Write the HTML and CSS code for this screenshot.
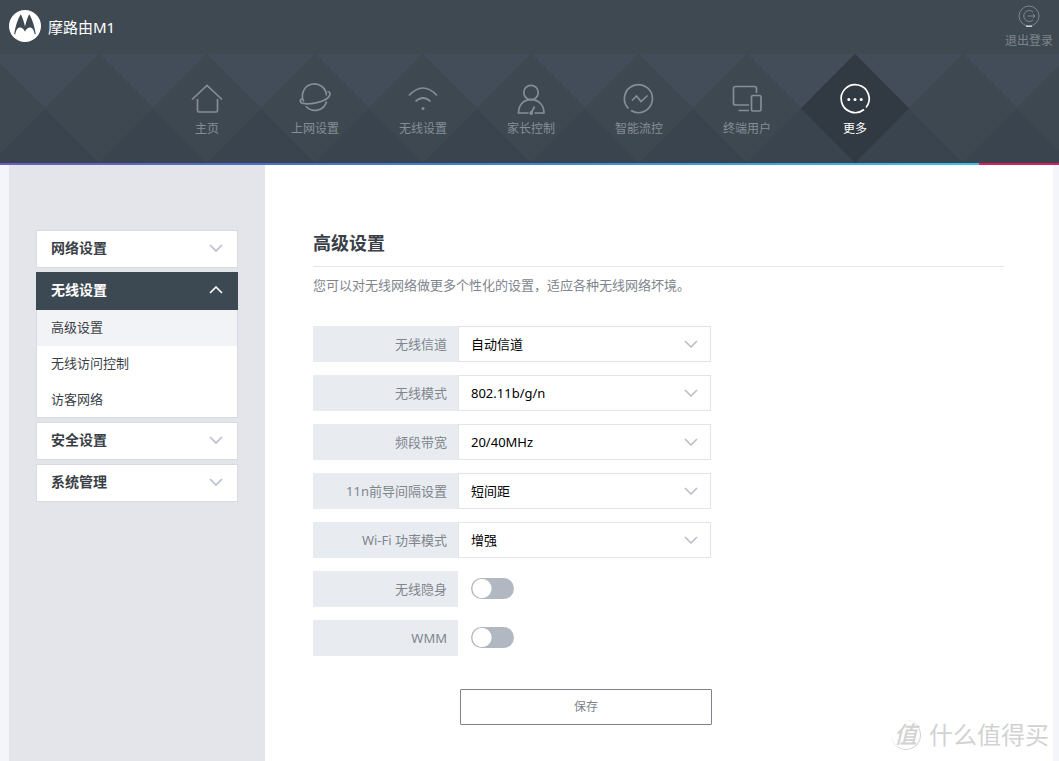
FILE: index.html
```html
<!DOCTYPE html>
<html lang="zh-CN">
<head>
<meta charset="utf-8">
<meta name="viewport" content="width=device-width, initial-scale=1">
<title>摩路由M1</title>
<link rel="stylesheet" href="styles.css">
</head>
<body>
<header class="topbar">
  <div class="brand">
    <svg class="logo" viewBox="0 0 32 32" aria-hidden="true">
      <circle cx="16" cy="16" r="16" fill="#fff"/>
      <path d="M5.2 24.3C6.200 17.500 8.600 9 11.800 4.200C13.600 7.500 15 12 16 16.500C17 12 18.400 7.500 20.200 4.200C23.400 9 25.800 17.500 26.800 24.300H25.700C25 20.200 23.300 17.600 20.900 17.600C18.800 17.600 17 19.300 16 21.800C15 19.300 13.200 17.600 11.100 17.600C8.700 17.600 7 20.200 6.300 24.300Z" fill="#3f4952"/>
    </svg>
    <span>摩路由M1</span>
  </div>
  <a class="logout" href="#">
    <svg class="logout-icon" viewBox="0 0 22 22" aria-hidden="true">
      <circle cx="11" cy="11" r="10"/>
      <path d="M15 7A5.500 5.500 0 1 0 15 15M9.500 11H17M14.800 8.800L17 11L14.800 13.200"/>
      <path class="glow" d="M8 21.200H14"/>
    </svg>
    <span>退出登录</span>
  </a>
</header>
<nav class="nav" aria-label="主导航">
  <ul class="nav-list">
    <li><a class="nav-item" href="#">
      <svg class="icon" viewBox="0 0 34 34" aria-hidden="true"><path d="M2 17.500L17 3.500L32 17.500M7.500 17V28.500Q7.500 30 9 30H26Q27.500 30 27.500 28.500V17"/></svg>
      <span>主页</span></a></li>
    <li><a class="nav-item" href="#">
      <svg class="icon" viewBox="0 0 34 34" aria-hidden="true"><path d="M5.800 19.500A12 12 0 1 1 28.400 13.500M28.600 19.500A12 12 0 0 1 8 24.300M4.500 16.500C1.500 17 1.500 21 5 21.400C9 22.300 14 21.600 19 20.600C24 19.500 29 17.500 31 14.500C32.800 12 32 9.500 29.500 9.800"/></svg>
      <span>上网设置</span></a></li>
    <li><a class="nav-item" href="#">
      <svg class="icon" viewBox="0 0 34 34" aria-hidden="true"><path d="M3 13.500Q17-1.500 31 13.500M9.500 19.500Q17 12.500 24.500 19.500"/><circle class="dot" cx="17" cy="26.500" r="1.500"/></svg>
      <span>无线设置</span></a></li>
    <li><a class="nav-item" href="#">
      <svg class="icon" viewBox="0 0 34 34" aria-hidden="true"><circle cx="17" cy="10.500" r="7.200"/><path d="M14.500 31H4.500C4.500 23.500 9 17.700 17 17.700C25 17.700 30 23.500 30 31H20.500M17.500 30.500L20.500 24.500"/><circle class="dot" cx="17.200" cy="31" r="1.900"/></svg>
      <span>家长控制</span></a></li>
    <li><a class="nav-item" href="#">
      <svg class="icon" viewBox="0 0 34 34" aria-hidden="true"><path d="M6.500 26.500A14 14 0 1 1 9 28.500M10 18.500L14.500 14L19 19.500L25.500 13.500"/></svg>
      <span>智能流控</span></a></li>
    <li><a class="nav-item" href="#">
      <svg class="icon" viewBox="0 0 34 34" aria-hidden="true"><path d="M26.500 11V6.500Q26.500 4.500 24.500 4.500H5.500Q3.500 4.500 3.500 6.500V21Q3.500 23 5.500 23H19M8.500 28.500H19"/><rect x="21.500" y="13.500" width="9.500" height="15.500" rx="1.500"/></svg>
      <span>终端用户</span></a></li>
    <li><a class="nav-item active" href="#" aria-current="page">
      <svg class="icon" viewBox="0 0 34 34" aria-hidden="true"><path d="M26 27.500A14 14 0 1 1 28 25.500"/><circle class="dot" cx="10.800" cy="17.500" r="1.500"/><circle class="dot" cx="17" cy="17.500" r="1.500"/><circle class="dot" cx="23.200" cy="17.500" r="1.500"/></svg>
      <span>更多</span></a></li>
  </ul>
</nav>
<div class="stripe"><div class="stripe-cool"></div><div class="stripe-warm"></div></div>
<div class="page">
  <aside class="sidebar">
    <button class="menu-head" type="button" aria-expanded="false"><span>网络设置</span>
      <svg class="chevron" viewBox="0 0 14 8" aria-hidden="true"><path d="M1 1L7 7L13 1"/></svg></button>
    <div class="menu-group">
      <button class="menu-head open" type="button" aria-expanded="true"><span>无线设置</span>
        <svg class="chevron" viewBox="0 0 14 8" aria-hidden="true"><path d="M1 7L7 1L13 7"/></svg></button>
      <div class="submenu">
        <a class="sub-item current" href="#">高级设置</a>
        <a class="sub-item" href="#">无线访问控制</a>
        <a class="sub-item" href="#">访客网络</a>
      </div>
    </div>
    <button class="menu-head" type="button" aria-expanded="false"><span>安全设置</span>
      <svg class="chevron" viewBox="0 0 14 8" aria-hidden="true"><path d="M1 1L7 7L13 1"/></svg></button>
    <button class="menu-head" type="button" aria-expanded="false"><span>系统管理</span>
      <svg class="chevron" viewBox="0 0 14 8" aria-hidden="true"><path d="M1 1L7 7L13 1"/></svg></button>
  </aside>
  <main class="main">
    <h1 class="title">高级设置</h1>
    <p class="intro">您可以对无线网络做更多个性化的设置，适应各种无线网络坏境。</p>
    <form class="form">
      <div class="row"><label class="label" for="channel">无线信道</label>
        <div class="select"><select id="channel"><option>自动信道</option></select><svg class="chevron" viewBox="0 0 14 8" aria-hidden="true"><path d="M1 1L7 7L13 1"/></svg></div></div>
      <div class="row"><label class="label" for="mode">无线模式</label>
        <div class="select"><select id="mode"><option>802.11b/g/n</option></select><svg class="chevron" viewBox="0 0 14 8" aria-hidden="true"><path d="M1 1L7 7L13 1"/></svg></div></div>
      <div class="row"><label class="label" for="band">频段带宽</label>
        <div class="select"><select id="band"><option>20/40MHz</option></select><svg class="chevron" viewBox="0 0 14 8" aria-hidden="true"><path d="M1 1L7 7L13 1"/></svg></div></div>
      <div class="row"><label class="label" for="guard">11n前导间隔设置</label>
        <div class="select"><select id="guard"><option>短间距</option></select><svg class="chevron" viewBox="0 0 14 8" aria-hidden="true"><path d="M1 1L7 7L13 1"/></svg></div></div>
      <div class="row"><label class="label" for="power">Wi-Fi 功率模式</label>
        <div class="select"><select id="power"><option>增强</option></select><svg class="chevron" viewBox="0 0 14 8" aria-hidden="true"><path d="M1 1L7 7L13 1"/></svg></div></div>
      <div class="row"><label class="label" for="hidden">无线隐身</label><input class="toggle" id="hidden" type="checkbox" role="switch"></div>
      <div class="row"><label class="label" for="wmm">WMM</label><input class="toggle" id="wmm" type="checkbox" role="switch"></div>
      <button class="save" type="button">保存</button>
    </form>
  </main>
</div>
<div class="watermark"><span class="seal">值</span><span>什么值得买</span></div>
</body>
</html>
```
FILE: styles.css
```css
* {
  box-sizing: border-box;
}

body {
  margin: 0;
  min-height: 100vh;
  display: flex;
  flex-direction: column;
  background: #f4f5fa;
  color: #3a3f47;
  font-family: "Noto Sans", "Noto Sans CJK SC", sans-serif;
  font-size: 13px;
  line-height: 20px;
}

button,
select {
  font: inherit;
  color: inherit;
}

a {
  color: inherit;
  text-decoration: none;
}

svg {
  fill: none;
  stroke: currentColor;
}

.topbar {
  height: 54px;
  display: flex;
  justify-content: space-between;
  padding: 0 6px 0 9px;
  background: #3f4952;
}

.brand {
  display: flex;
  align-items: center;
  gap: 7px;
  padding-bottom: 2px;
  color: #fff;
  font-size: 15px;
}

.brand span {
  padding-top: 2px;
}

.logo {
  width: 32px;
  height: 32px;
  stroke: none;
}

.logout {
  display: flex;
  flex-direction: column;
  align-items: center;
  gap: 4px;
  padding-top: 5px;
  color: #7d858e;
  font-size: 12px;
}

.logout-icon {
  width: 22px;
  height: 22px;
}

.glow {
  stroke: #fff;
}

.nav {
  height: 109px;
  padding-left: 3px;
  background-color: #3a444f;
  background-image:
    linear-gradient(135deg, #434d59 25%, transparent 25%),
    linear-gradient(225deg, #434d59 25%, transparent 25%),
    linear-gradient(45deg, #3a444f 25%, transparent 25%),
    linear-gradient(315deg, #3a444f 25%, #3e4851 25%);
  background-size: 108px 108px;
  background-position: center top;
  background-origin: content-box;
  background-repeat: repeat-x;
}

.nav-list {
  display: flex;
  justify-content: center;
  margin: 0;
  padding: 0;
  list-style: none;
}

.nav-item {
  width: 108px;
  height: 109px;
  display: flex;
  flex-direction: column;
  align-items: center;
  gap: 3px;
  padding-top: 28px;
  color: #858e97;
  font-size: 12px;
}

.nav-item.active {
  color: #fff;
  background: #313943;
  clip-path: polygon(50% 0, 100% 50%, 50% 100%, 0 50%);
}

.icon {
  width: 34px;
  height: 34px;
  stroke-width: 1.7;
}

.dot {
  fill: currentColor;
  stroke: none;
}

.stripe {
  display: flex;
  height: 2px;
}

.stripe-cool {
  flex: 1;
  background: linear-gradient(90deg, #6c5cc0, #4a6fd0 28%, #3a88da 55%, #40bdee);
}

.stripe-warm {
  width: 80px;
  background: #d81e5f;
}

.page {
  flex: 1;
  display: flex;
  margin: 0 6px 0 9px;
}

.sidebar {
  width: 256px;
  display: flex;
  flex-direction: column;
  gap: 4px;
  padding: 65px 27px;
  background: #e4e5eb;
}

.menu-head {
  width: 100%;
  height: 38px;
  display: flex;
  align-items: center;
  justify-content: space-between;
  padding: 0 14px 2px;
  border: 1px solid #dadbe2;
  background: #fff;
  font-size: 14px;
  font-weight: 700;
}

.menu-head.open {
  border-color: #3c4852;
  background: #3c4852;
  color: #fff;
}

.chevron {
  width: 14px;
  height: 8px;
  color: #b8bfc8;
  stroke-width: 1.6;
}

.open .chevron {
  color: #fff;
}

.submenu {
  height: 108px;
  border: 1px solid #dadbe2;
  border-top: 0;
  background: #fff;
}

.sub-item {
  display: block;
  padding: 7px 14px 9px;
}

.sub-item.current {
  background: #f2f3f7;
}

.main {
  flex: 1;
  padding: 65px 49px 36px 48px;
  background: #fff;
}

.title {
  margin: 0;
  padding-bottom: 9px;
  border-bottom: 1px solid #e4e6ed;
  font-size: 18px;
  line-height: 27px;
}

.intro {
  margin: 8px 0 31px;
  color: #80858d;
}

.form {
  max-width: 399px;
  display: flex;
  flex-direction: column;
  gap: 13px;
}

.row {
  height: 36px;
  display: flex;
  align-items: center;
  padding-right: 1px;
}

.label {
  width: 145px;
  padding: 8px 11px;
  background: #e8ecf1;
  color: #80858d;
  text-align: right;
}

.select {
  flex: 1;
  display: grid;
  align-items: center;
}

.select select {
  grid-area: 1 / 1;
  width: 100%;
  height: 36px;
  padding: 0 12px;
  border: 1px solid #e1e5eb;
  border-radius: 0;
  background: #fff;
  color: #000;
  appearance: none;
}

.select .chevron {
  grid-area: 1 / 1;
  justify-self: end;
  margin-right: 13px;
  pointer-events: none;
}

.toggle {
  width: 43px;
  height: 21px;
  margin: 0 0 1px 13px;
  border-radius: 11px;
  background: radial-gradient(circle at 11px 50%, #fff 9px, #b2b8c1 10px);
  appearance: none;
}

.toggle:checked {
  background: radial-gradient(circle at 32px 50%, #fff 9px, #40bdee 10px);
}

.save {
  height: 36px;
  margin: 20px 0 0 147px;
  border: 1px solid #7e828b;
  border-radius: 1px;
  background: #fff;
  color: #7e828b;
  font-size: 12px;
}

.watermark {
  position: absolute;
  right: 10px;
  top: 719px;
  display: flex;
  align-items: center;
  gap: 8px;
  color: #d2d2d2;
  font-size: 24px;
  line-height: 32px;
  pointer-events: none;
}

.seal {
  width: 30px;
  height: 30px;
  border-right: 1px solid #d2d2d2;
  border-bottom: 1px solid #d2d2d2;
  border-radius: 50%;
  font-size: 23px;
  font-weight: 500;
  font-style: italic;
  line-height: 28px;
  text-align: center;
}
```
